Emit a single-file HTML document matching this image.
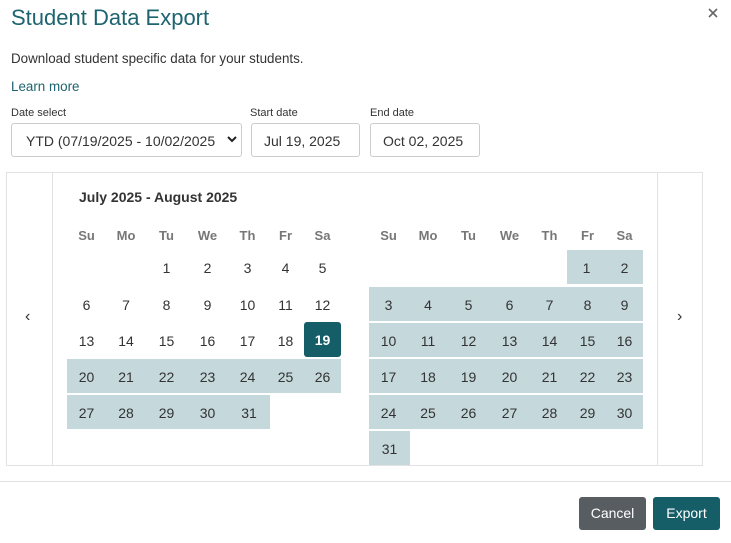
<!DOCTYPE html>
<html><head><meta charset="utf-8"><style>
body{margin:0;width:731px;height:543px;background:#fff;font-family:"Liberation Sans",sans-serif;color:#333;position:relative;overflow:hidden}
.a{position:absolute}
.t{left:11px;top:5px;font-size:22px;color:#1d6470}
.lbl{font-size:11px;color:#333}
.box{border:1px solid #ccc;border-radius:3px;background:#fff;font-size:14px;color:#333;box-sizing:border-box;padding-top:9px}
.cal{left:6px;top:172px;width:697px;height:294px;border:1px solid #e2e2e2;box-sizing:border-box}
.c{position:absolute;height:34px;line-height:36px;text-align:center;font-size:14px;color:#333}
.h{background:#c5d8dc}
.s{background:#155e68;color:#fff;font-weight:bold;border-radius:3px}
.dw{position:absolute;top:228px;font-size:13px;color:#777;font-weight:bold;text-align:center}
.btn{position:absolute;top:497px;height:33px;border-radius:3px;color:#fff;font-size:14px;text-align:center;line-height:33px}
</style></head><body>
<div class="a t">Student Data Export</div>
<svg class="a" style="left:708px;top:8px" width="10" height="10" viewBox="0 0 10 10"><path d="M1 1L9 9M9 1L1 9" stroke="#666" stroke-width="1.6"/></svg>
<div class="a" style="left:11px;top:51px;font-size:13.4px">Download student specific data for your students.</div>
<div class="a" style="left:11px;top:79px;font-size:13.4px;color:#1d6470">Learn more</div>
<div class="a lbl" style="left:11px;top:107px">Date select</div>
<div class="a lbl" style="left:250px;top:107px">Start date</div>
<div class="a lbl" style="left:370px;top:107px">End date</div>
<div class="a box" style="left:11px;top:123px;width:231px;height:34px"></div>
<div class="a" style="left:26px;top:133px;width:190px;overflow:hidden;white-space:nowrap;font-size:14px">YTD (07/19/2025 - 10/02/2025</div>
<svg class="a" style="left:227px;top:136px" width="10" height="7" viewBox="0 0 10 7"><path d="M1 1L5 5L9 1" stroke="#222" stroke-width="2" fill="none"/></svg>
<div class="a box" style="left:251px;top:123px;width:109px;height:34px;padding-left:12px">Jul 19, 2025</div>
<div class="a box" style="left:370px;top:123px;width:110px;height:34px;padding-left:12px">Oct 02, 2025</div>
<div class="a cal"></div>
<div class="a" style="left:52px;top:172px;width:1px;height:294px;background:#e2e2e2"></div>
<div class="a" style="left:657px;top:172px;width:1px;height:294px;background:#e2e2e2"></div>
<div class="a" style="left:25px;top:308px;font-size:16px">‹</div>
<div class="a" style="left:677px;top:308px;font-size:16px">›</div>
<div class="a" style="left:79px;top:189px;font-size:14px;font-weight:bold;color:#333">July 2025 - August 2025</div>

<div class="dw" style="left:67px;width:39px">Su</div><div class="dw" style="left:106px;width:40px">Mo</div><div class="dw" style="left:146px;width:41px">Tu</div><div class="dw" style="left:187px;width:41px">We</div><div class="dw" style="left:228px;width:39px">Th</div><div class="dw" style="left:267px;width:37px">Fr</div><div class="dw" style="left:304px;width:37px">Sa</div>
<div class="dw" style="left:369px;width:39px">Su</div><div class="dw" style="left:408px;width:40px">Mo</div><div class="dw" style="left:448px;width:41px">Tu</div><div class="dw" style="left:489px;width:41px">We</div><div class="dw" style="left:530px;width:39px">Th</div><div class="dw" style="left:569px;width:37px">Fr</div><div class="dw" style="left:606px;width:37px">Sa</div>

<div class="c" style="left:146px;top:250px;width:41px">1</div><div class="c" style="left:187px;top:250px;width:41px">2</div><div class="c" style="left:228px;top:250px;width:39px">3</div><div class="c" style="left:267px;top:250px;width:37px">4</div><div class="c" style="left:304px;top:250px;width:37px">5</div>
<div class="c" style="left:67px;top:287px;width:39px">6</div><div class="c" style="left:106px;top:287px;width:40px">7</div><div class="c" style="left:146px;top:287px;width:41px">8</div><div class="c" style="left:187px;top:287px;width:41px">9</div><div class="c" style="left:228px;top:287px;width:39px">10</div><div class="c" style="left:267px;top:287px;width:37px">11</div><div class="c" style="left:304px;top:287px;width:37px">12</div>
<div class="c" style="left:67px;top:323px;width:39px">13</div><div class="c" style="left:106px;top:323px;width:40px">14</div><div class="c" style="left:146px;top:323px;width:41px">15</div><div class="c" style="left:187px;top:323px;width:41px">16</div><div class="c" style="left:228px;top:323px;width:39px">17</div><div class="c" style="left:267px;top:323px;width:37px">18</div><div class="c s" style="left:304px;top:322px;width:37px;height:35px">19</div>
<div class="c h" style="left:67px;top:359px;width:39px">20</div><div class="c h" style="left:106px;top:359px;width:40px">21</div><div class="c h" style="left:146px;top:359px;width:41px">22</div><div class="c h" style="left:187px;top:359px;width:41px">23</div><div class="c h" style="left:228px;top:359px;width:39px">24</div><div class="c h" style="left:267px;top:359px;width:37px">25</div><div class="c h" style="left:304px;top:359px;width:37px">26</div>
<div class="c h" style="left:67px;top:395px;width:39px">27</div><div class="c h" style="left:106px;top:395px;width:40px">28</div><div class="c h" style="left:146px;top:395px;width:41px">29</div><div class="c h" style="left:187px;top:395px;width:41px">30</div><div class="c h" style="left:228px;top:395px;width:42px">31</div>

<div class="c h" style="left:567px;top:250px;width:39px">1</div><div class="c h" style="left:606px;top:250px;width:37px">2</div>
<div class="c h" style="left:369px;top:287px;width:39px">3</div><div class="c h" style="left:408px;top:287px;width:40px">4</div><div class="c h" style="left:448px;top:287px;width:41px">5</div><div class="c h" style="left:489px;top:287px;width:41px">6</div><div class="c h" style="left:530px;top:287px;width:39px">7</div><div class="c h" style="left:569px;top:287px;width:37px">8</div><div class="c h" style="left:606px;top:287px;width:37px">9</div>
<div class="c h" style="left:369px;top:323px;width:39px">10</div><div class="c h" style="left:408px;top:323px;width:40px">11</div><div class="c h" style="left:448px;top:323px;width:41px">12</div><div class="c h" style="left:489px;top:323px;width:41px">13</div><div class="c h" style="left:530px;top:323px;width:39px">14</div><div class="c h" style="left:569px;top:323px;width:37px">15</div><div class="c h" style="left:606px;top:323px;width:37px">16</div>
<div class="c h" style="left:369px;top:359px;width:39px">17</div><div class="c h" style="left:408px;top:359px;width:40px">18</div><div class="c h" style="left:448px;top:359px;width:41px">19</div><div class="c h" style="left:489px;top:359px;width:41px">20</div><div class="c h" style="left:530px;top:359px;width:39px">21</div><div class="c h" style="left:569px;top:359px;width:37px">22</div><div class="c h" style="left:606px;top:359px;width:37px">23</div>
<div class="c h" style="left:369px;top:395px;width:39px">24</div><div class="c h" style="left:408px;top:395px;width:40px">25</div><div class="c h" style="left:448px;top:395px;width:41px">26</div><div class="c h" style="left:489px;top:395px;width:41px">27</div><div class="c h" style="left:530px;top:395px;width:39px">28</div><div class="c h" style="left:569px;top:395px;width:37px">29</div><div class="c h" style="left:606px;top:395px;width:37px">30</div>
<div class="c h" style="left:369px;top:431px;width:41px">31</div>

<div class="a" style="left:0;top:481px;width:731px;height:1px;background:#e2e2e2"></div>
<div class="btn" style="left:579px;width:67px;background:#585d62">Cancel</div>
<div class="btn" style="left:653px;width:67px;background:#155e68">Export</div>
</body></html>
